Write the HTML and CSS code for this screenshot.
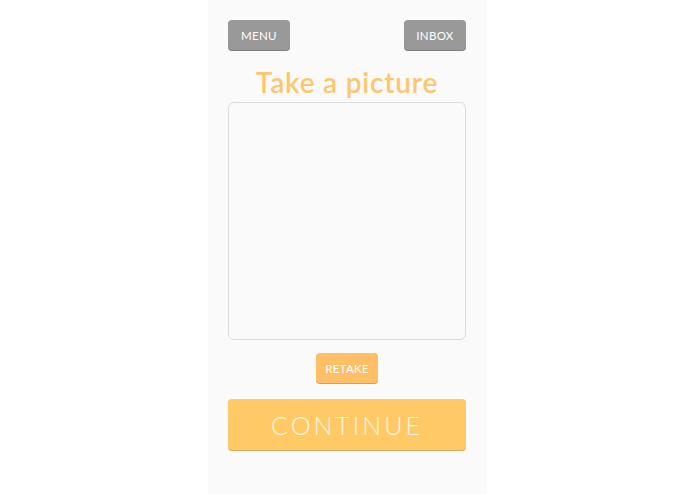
FILE: index.html
```html
<!DOCTYPE html>
<html>
<head>
<meta charset="utf-8">
<link rel="stylesheet" href="styles.css">
</head>
<body>
<div class="app">
  <div class="topbar">
    <button class="btn btn-grey">MENU</button>
    <button class="btn btn-grey">INBOX</button>
  </div>
  <h1 class="title">Take a picture</h1>
  <div class="photo"></div>
  <div class="retake-row">
    <button class="btn btn-orange">RETAKE</button>
  </div>
  <button class="continue">CONTINUE</button>
</div>
</body>
</html>
```
FILE: styles.css
```css
html, body {
  margin: 0;
  padding: 0;
  background: #ffffff;
  height: 100%;
}
body {
  font-family: "Lato", "Open Sans", sans-serif;
}
.app {
  width: 279px;
  margin: 0 auto;
  min-height: 494px;
  background: #fafafa;
  box-sizing: border-box;
  padding: 20px 21px 0 20px;
  display: flex;
  flex-direction: column;
}
.topbar {
  display: flex;
  justify-content: space-between;
}
.btn {
  width: 62px;
  height: 30px;
  border: none;
  border-radius: 4px;
  color: #ffffff;
  font-family: "Lato", sans-serif;
  font-size: 11.5px;
  font-weight: 400;
  letter-spacing: 0.3px;
  padding: 0;
  cursor: pointer;
}
.btn-grey {
  background: #999999;
  box-shadow: 0 1px 0 #7e7e7e;
}
.btn-orange {
  background: #ffbf66;
  box-shadow: 0 1px 0 #d9a050;
}
.title {
  margin: 16px 0 0 0;
  height: 32px;
  line-height: 32px;
  text-align: center;
  color: #fcc76e;
  font-size: 28px;
  font-weight: 600;
  letter-spacing: 0.8px;
}
.photo {
  margin-top: 4px;
  height: 238px;
  border: 1px solid #dcdcdc;
  border-radius: 6px;
  background: #fafafa;
  box-sizing: border-box;
}
.retake-row {
  display: flex;
  justify-content: center;
  margin-top: 13px;
}
.continue {
  margin-top: 16px;
  height: 51px;
  width: 100%;
  border: none;
  border-radius: 4px;
  background: #ffca66;
  box-shadow: 0 1px 0 #d8aa5c;
  color: #fff6e4;
  font-family: "Lato", sans-serif;
  font-size: 25px;
  font-weight: 300;
  letter-spacing: 3px;
  padding: 0;
}
```
